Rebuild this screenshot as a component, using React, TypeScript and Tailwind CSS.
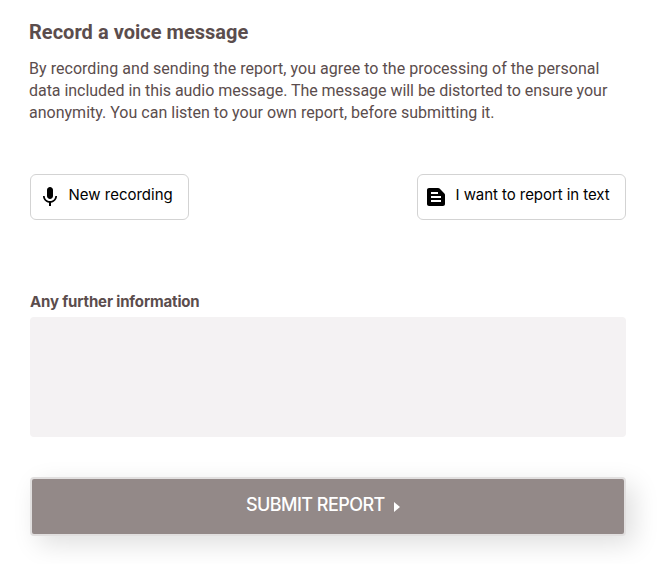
import React from 'react';
import { MdMic, MdTextSnippet } from 'react-icons/md';

const App: React.FC = () => {
  const intro = [
    { text: 'By recording and sending the report, you agree to the processing of the personal', spacing: 'tracking-[0.04px]' },
    { text: 'data included in this audio message. The message will be distorted to ensure your', spacing: 'tracking-[-0.04px]' },
    { text: 'anonymity. You can listen to your own report, before submitting it.', spacing: 'tracking-[0.01px]' },
  ];

  return (
    <div className="h-[564px] w-[658px] overflow-hidden bg-white pl-[30px] pr-8 pt-5 text-[#5b4d4d] font-[family-name:Roboto,sans-serif]">
      {/* Intro */}
      <h1 className="-ml-px h-6 whitespace-nowrap text-[20px] font-bold leading-6 tracking-[0.03px]">
        <span>Record a voice message</span>
      </h1>
      <p className="-ml-px mt-[14px] whitespace-nowrap text-[16px] leading-[22px]">
        {intro.map((line) => (
          <span key={line.text} className="block">
            <span className={line.spacing}>{line.text} </span>
          </span>
        ))}
      </p>

      {/* Report type */}
      <div className="mt-[50px] flex justify-between text-[15px] text-black font-[family-name:Inter,sans-serif]">
        <button type="button" className="flex h-[46px] w-[159px] items-center whitespace-nowrap rounded-[6px] border border-[#d3d3d3] pl-[6.5px]">
          <MdMic className="h-6 w-6 shrink-0" />
          <span className="-mt-[3px] ml-[7px]">New recording</span>
        </button>
        <button type="button" className="flex h-[46px] w-[209px] items-center whitespace-nowrap rounded-[6px] border border-[#d3d3d3] pl-[6px]">
          <MdTextSnippet className="h-6 w-6 shrink-0" />
          <span className="-mt-[3px] ml-[7.5px] tracking-[-0.06px]">I want to report in text</span>
        </button>
      </div>

      {/* Additional details */}
      <label htmlFor="details" className="mt-[71px] block h-[22px] text-[15px] font-bold leading-[22px] tracking-[-0.15px] font-[family-name:Inter,sans-serif]">
        <span>Any further information</span>
      </label>
      <textarea id="details" className="mt-1 block h-[120px] w-full resize-none rounded-[4px] bg-[#f4f2f3] p-3 outline-none" />

      <button
        type="button"
        className="mt-10 flex h-[59px] w-full items-center whitespace-nowrap rounded-[4px] border-2 border-[#e1dfdf] bg-[#938988] pl-[214px] text-[18px] font-medium text-white shadow-[8px_8px_26px_rgba(0,0,0,0.13)] font-[family-name:Inter,sans-serif]"
      >
        <span className="-mt-1 tracking-[-0.55px]">SUBMIT REPORT</span>
        <svg className="ml-[9px] mt-px h-[10px] w-[6px]" viewBox="0 0 6 10" fill="currentColor">
          <path d="M0 0L6 5L0 10Z" />
        </svg>
      </button>
    </div>
  );
};

export default App;
